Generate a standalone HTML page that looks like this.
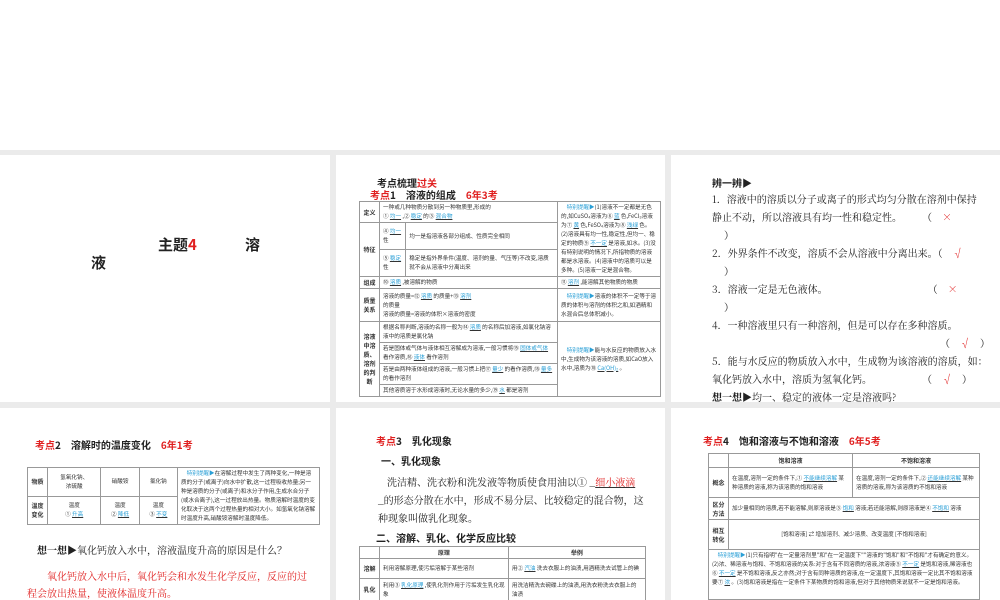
<!DOCTYPE html>
<html><head><meta charset="utf-8"><style>
*{margin:0;padding:0;box-sizing:border-box}
body{width:1000px;height:600px;background:#fff;position:relative;overflow:hidden;font-family:"Liberation Serif","Noto Serif CJK SC","Noto Sans CJK SC",serif;color:#222}
.bg{position:absolute;left:0;top:150px;width:1000px;height:450px;background:#ebebeb}
.p{position:absolute;background:#fff;overflow:hidden}
.a{position:absolute;white-space:nowrap}
.r{color:#e02020}.b{color:#2a9fd6}
table{position:absolute;border-collapse:collapse;font-size:5.6px;line-height:9px;font-family:"Noto Sans CJK SC",sans-serif;color:#333}
td{border:1px solid #999;padding:1px 3px;vertical-align:middle}
th{border:1px solid #999;font-weight:bold;font-size:6px}
.h{font-weight:bold;text-align:center;font-size:6px}
.t{font-size:10px;line-height:18px;font-family:"Noto Serif CJK SC",serif}
.k{font-weight:bold;font-size:10px;font-family:"Noto Sans CJK SC",sans-serif}
u{color:#2a9fd6;text-decoration-color:#333}
</style></head><body>
<div class="bg"></div>
<!-- row1 -->
<div class="p" style="left:0;top:155px;width:330px;height:247px">
<div class="a" style="left:158px;top:79px;font-size:15px;font-weight:bold;font-family:'Noto Sans CJK SC',sans-serif">主题<span class="r">4</span></div>
<div class="a" style="left:245px;top:79px;font-size:15px;font-weight:bold;font-family:'Noto Sans CJK SC',sans-serif">溶</div>
<div class="a" style="left:91px;top:97px;font-size:15px;font-weight:bold;font-family:'Noto Sans CJK SC',sans-serif">液</div>
</div>
<div class="p" style="left:336px;top:155px;width:329px;height:247px">
<div class="a k" style="left:41px;top:20px">考点梳理<span class="r">过关</span></div>
<div class="a k" style="left:34px;top:32px"><span class="r">考点</span>1　溶液的组成　<span class="r">6年3考</span></div>
<table style="left:23px;top:46px;width:302px">
<tr><td class="h" style="width:20px">定义</td><td colspan="2">一种或几种物质分散到另一种物质里,形成的<br>① <u>均一</u> ,② <u>稳定</u> 的③ <u>混合物</u></td><td rowspan="3" style="width:103px">　<span class="b">特别提醒▶</span>(1)溶液不一定都是无色的,如CuSO₄溶液为⑥ <u>蓝</u> 色,FeCl₃溶液为⑦ <u>黄</u> 色,FeSO₄溶液为⑧ <u>浅绿</u> 色。(2)溶液具有均一性,稳定性,但均一、稳定的物质⑨ <u>不一定</u> 是溶液,如水。(3)没有特别说明的情况下,所指物质的溶液都是水溶液。(4)溶液中的溶质可以是多种。(5)溶液一定是混合物。</td></tr>
<tr><td class="h" rowspan="2">特征</td><td style="height:27px">④ <u>均一</u> 性</td><td>均一是指溶液各部分组成、性质完全相同</td></tr>
<tr><td style="height:27px">⑤ <u>稳定</u> 性</td><td>稳定是指外界条件(温度、溶剂的量、气压等)不改变,溶质就不会从溶液中分离出来</td></tr>
<tr><td class="h">组成</td><td colspan="2">⑩ <u>溶质</u> ,被溶解的物质</td><td>⑪ <u>溶剂</u> ,能溶解其他物质的物质</td></tr>
<tr><td class="h" style="height:33px">质量<br>关系</td><td colspan="2">溶液的质量=⑫ <u>溶质</u> 的质量+⑬ <u>溶剂</u><br>的质量<br>溶液的质量=溶液的体积×溶液的密度</td><td>　<span class="b">特别提醒▶</span>溶液的体积不一定等于溶质的体积与溶剂的体积之和,如酒精和水混合后总体积减小。</td></tr>
<tr><td class="h" rowspan="4">溶液中溶质、溶剂的判断</td><td colspan="2">根据名称判断,溶液的名称一般为⑭ <u>溶质</u> 的名称后加溶液,如氯化钠溶液中的溶质是氯化钠</td><td rowspan="4">　<span class="b">特别提醒▶</span>能与水反应的物质放入水中,生成物为该溶液的溶质,如CaO放入水中,溶质为⑱ <u>Ca(OH)₂</u> 。</td></tr>
<tr><td colspan="2">若是固体或气体与液体相互溶解成为溶液,一般习惯将⑮ <u>固体或气体</u> 看作溶质,⑯ <u>液体</u> 看作溶剂</td></tr>
<tr><td colspan="2">若是由两种液体组成的溶液,一般习惯上把⑰ <u>量少</u> 的看作溶质,⑱ <u>量多</u> 的看作溶剂</td></tr>
<tr><td colspan="2">其他溶质溶于水形成溶液时,无论水量的多少,⑲ <u>水</u> 都是溶剂</td></tr>
</table>
</div>
<div class="p" style="left:671px;top:155px;width:329px;height:247px">
<div class="a k" style="left:41px;top:20px">辨一辨▶</div>
<div class="a t" style="left:41px;top:35px">1．溶液中的溶质以分子或离子的形式均匀分散在溶剂中保持</div>
<div class="a t" style="left:41px;top:53px">静止不动，所以溶液具有均一性和稳定性。　　　（　<span class="r">×</span></div>
<div class="a t" style="left:53px;top:71px">）</div>
<div class="a t" style="left:41px;top:89px">2．外界条件不改变，溶质不会从溶液中分离出来。（　<span class="r">√</span></div>
<div class="a t" style="left:53px;top:107px">）</div>
<div class="a t" style="left:41px;top:125px">3．溶液一定是无色液体。　　　　　　　　　　　（　<span class="r">×</span></div>
<div class="a t" style="left:53px;top:143px">）</div>
<div class="a t" style="left:41px;top:161px">4．一种溶液里只有一种溶剂，但是可以存在多种溶质。</div>
<div class="a t" style="left:269px;top:179px">（　<span class="r">√</span>　）</div>
<div class="a t" style="left:41px;top:197px">5．能与水反应的物质放入水中，生成物为该溶液的溶质，如：</div>
<div class="a t" style="left:41px;top:215px">氧化钙放入水中，溶质为氢氧化钙。　　　　　　（　<span class="r">√</span>　）</div>
<div class="a t" style="left:41px;top:233px"><b>想一想▶</b>均一、稳定的液体一定是溶液吗?</div>
</div>
<!-- row2 -->
<div class="p" style="left:0;top:408px;width:330px;height:192px">
<div class="a k" style="left:35px;top:29px"><span class="r">考点</span>2　溶解时的温度变化　<span class="r">6年1考</span></div>
<table style="left:27px;top:59px;width:293px">
<tr><td class="h" style="width:20px;height:27px">物质</td><td style="text-align:center">氢氧化钠、<br>浓硫酸</td><td style="text-align:center">硝酸铵</td><td style="text-align:center">氯化钠</td><td rowspan="2" style="width:142px">　<span class="b">特别提醒▶</span>在溶解过程中发生了两种变化,一种是溶质的分子(或离子)向水中扩散,这一过程吸收热量;另一种是溶质的分子(或离子)和水分子作用,生成水合分子(或水合离子),这一过程放出热量。物质溶解时温度的变化取决于这两个过程热量的相对大小。如氢氧化钠溶解时温度升高,硝酸铵溶解时温度降低。</td></tr>
<tr><td class="h" style="height:27px">温度<br>变化</td><td style="text-align:center">温度<br>① <u>升高</u></td><td style="text-align:center">温度<br>② <u>降低</u></td><td style="text-align:center">温度<br>③ <u>不变</u></td></tr>
</table>
<div class="a t" style="left:37px;top:133px"><b>想一想▶</b>氧化钙放入水中，溶液温度升高的原因是什么？</div>
<div class="a t r" style="left:37px;top:159px">　氧化钙放入水中后，氧化钙会和水发生化学反应，反应的过</div>
<div class="a t r" style="left:27px;top:176px">程会放出热量，使液体温度升高。</div>
</div>
<div class="p" style="left:336px;top:408px;width:329px;height:192px">
<div class="a k" style="left:40px;top:25px"><span class="r">考点</span>3　乳化现象</div>
<div class="a k" style="left:45px;top:45px">一、乳化现象</div>
<div class="a t" style="left:51px;top:65px">洗洁精、洗衣粉和洗发液等物质使食用油以① _<u style="color:#e02020">细小液滴</u></div>
<div class="a t" style="left:42px;top:83px">_的形态分散在水中，形成不易分层、比较稳定的混合物，这</div>
<div class="a t" style="left:42px;top:101px">种现象叫做乳化现象。</div>
<div class="a k" style="left:40px;top:122px">二、溶解、乳化、化学反应比较</div>
<table style="left:23px;top:138px;width:287px">
<tr><td style="width:20px;height:12px"></td><th>原理</th><th>举例</th></tr>
<tr><td class="h" style="height:20px">溶解</td><td>利用溶解原理,使污垢溶解于某些溶剂</td><td>用② <u>汽油</u> 洗去衣服上的油渍,用酒精洗去试管上的碘</td></tr>
<tr><td class="h" style="height:22px">乳化</td><td>利用③ <u>乳化原理</u> ,使乳化剂作用于污垢发生乳化现象</td><td>用洗洁精洗去碗碟上的油渍,用洗衣粉洗去衣服上的油渍</td></tr>
</table>
</div>
<div class="p" style="left:671px;top:408px;width:329px;height:192px">
<div class="a k" style="left:32px;top:25px"><span class="r">考点</span>4　饱和溶液与不饱和溶液　<span class="r">6年5考</span></div>
<table style="left:37px;top:45px;width:272px">
<tr><td style="width:20px;height:14px"></td><th>饱和溶液</th><th>不饱和溶液</th></tr>
<tr><td class="h" style="height:30px">概念</td><td>在温度,溶剂一定的条件下,① <u>不能继续溶解</u> 某种溶质的溶液,称为该溶质的饱和溶液</td><td>在温度,溶剂一定的条件下,② <u>还能继续溶解</u> 某种溶质的溶液,称为该溶质的不饱和溶液</td></tr>
<tr><td class="h" style="height:22px">区分<br>方法</td><td colspan="2">加少量相同的溶质,若不能溶解,则原溶液是③ <u>饱和</u> 溶液;若还能溶解,则原溶液是④ <u>不饱和</u> 溶液</td></tr>
<tr><td class="h" style="height:30px">相互<br>转化</td><td colspan="2" style="text-align:center">[饱和溶液] ⇄ 增加溶剂、减少溶质、改变温度 [不饱和溶液]</td></tr>
<tr><td colspan="3" style="height:50px;vertical-align:top">　<span class="b">特别提醒▶</span>(1)只有指明"在一定量溶剂里"和"在一定温度下""溶液的"饱和"和"不饱和"才有确定的意义。(2)浓、稀溶液与饱和、不饱和溶液的关系:对于含有不同溶质的溶液,浓溶液⑤ <u>不一定</u> 是饱和溶液,稀溶液也⑥ <u>不一定</u> 是不饱和溶液,反之亦然;对于含有同种溶质的溶液,在一定温度下,其饱和溶液一定比其不饱和溶液要⑦ <u>浓</u> 。(3)饱和溶液是指在一定条件下某物质的饱和溶液,但对于其他物质来说就不一定是饱和溶液。</td></tr>
</table>
</div>
</body></html>
